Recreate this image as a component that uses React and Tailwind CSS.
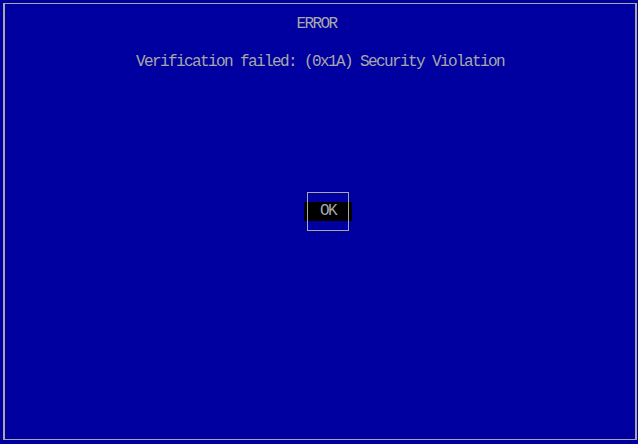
export default function App() {
  const mono = { fontFamily: '"Liberation Mono", "DejaVu Sans Mono", monospace' }

  return (
    <div className="w-[638px] h-[444px] bg-[#0000a0] pt-[3px] pl-[3px] overflow-hidden" style={mono}>
      {/* text-mode window frame: doubled side lines, single top/bottom */}
      <div className="w-[634px] h-[437px] border-x-2 border-y border-[#a8a8a8] flex flex-col items-center text-[#a8a8a8] text-[16px] leading-[16px] tracking-[-1.6px]">
        <div className="mt-[12px] mr-[7px]">ERROR</div>
        <div className="mt-[22px] whitespace-pre">Verification failed: (0x1A) Security Violation</div>

        {/* OK button with focus box */}
        <div className="relative mt-[132px] ml-[16px]">
          <div className="w-[48px] h-[19px] bg-black flex items-center justify-center leading-[19px]">OK</div>
          <div className="absolute left-[3px] top-[-10px] w-[42px] h-[39px] border border-[#a8a8a8]" />
        </div>
      </div>
    </div>
  )
}
